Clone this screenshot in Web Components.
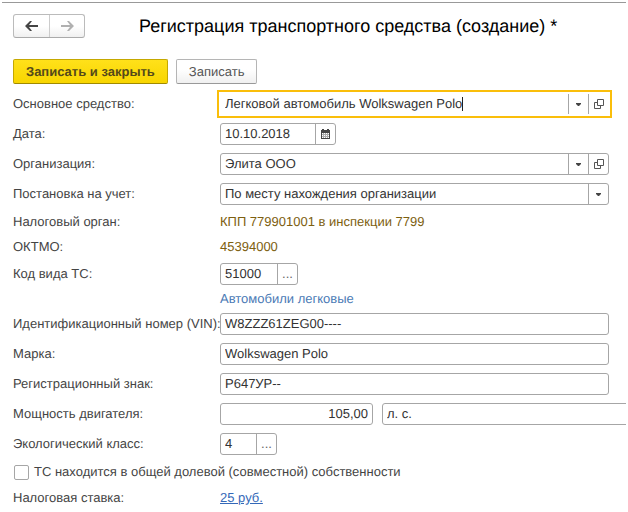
<!DOCTYPE html>
<html lang="ru">
<head>
<meta charset="utf-8">
<meta name="viewport" content="width=device-width">
<title>Регистрация транспортного средства</title>
<style>
  body {
    margin: 0;
    background: #fff;
    color: #444;
    font: 13px/16px "Liberation Sans", Arial, sans-serif;
    text-rendering: geometricPrecision;
  }
</style>
</head>
<body>
<vehicle-page>
  <history-nav slot="nav"></history-nav>
  <span slot="title">Регистрация транспортного средства (создание) *</span>
  <command-button slot="commands" primary>Записать и закрыть</command-button>
  <command-button slot="commands">Записать</command-button>

  <field-row label="Основное средство:" value="Легковой автомобиль Wolkswagen Polo" buttons="list open" active></field-row>
  <field-row label="Дата:" value="10.10.2018" buttons="calendar" style="--w:116px"></field-row>
  <field-row label="Организация:" value="Элита ООО" buttons="list open"></field-row>
  <field-row label="Постановка на учет:" value="По месту нахождения организации" kind="select"></field-row>
  <text-row label="Налоговый орган:">КПП 779901001 в инспекции 7799</text-row>
  <text-row label="ОКТМО:">45394000</text-row>
  <field-row label="Код вида ТС:" value="51000" buttons="more" style="--w:78px"></field-row>
  <text-row kind="note">Автомобили легковые</text-row>
  <field-row label="Идентификационный номер (VIN):" value="W8ZZZ61ZEG00----"></field-row>
  <field-row label="Марка:" value="Wolkswagen Polo"></field-row>
  <field-row label="Регистрационный знак:" value="Р647УР--"></field-row>
  <field-row label="Мощность двигателя:" value="105,00" unit="л. с." style="--w:153px"></field-row>
  <field-row label="Экологический класс:" value="4" buttons="more" style="--w:57px"></field-row>
  <check-row>ТС находится в общей долевой (совместной) собственности</check-row>
  <text-row label="Налоговая ставка:" kind="link">25 руб.</text-row>
</vehicle-page>

<script>
const ICONS = {
  list: '<svg width="5" height="3" viewBox="0 0 5 3"><path d="M0 0h5v1L3 3H2L0 1z" fill="#444"/></svg>',
  open: '<svg width="10" height="10" viewBox="0 0 10 10" fill="none" stroke="#555"><path d="M3.5.5h6v6h-6zM3.5 3.5h-3v6h6v-3"/></svg>',
  calendar: '<svg width="9" height="10" viewBox="0 0 9 10"><path d="M0 1h1V0h2v1h3V0h2v1h1v9H0z" fill="#444"/><path d="M1 4h7v5H1z" fill="#fff"/><path d="M1 5.5h7M1 7.5h7M2.5 4v5M4.5 4v5M6.5 4v5" stroke="#aaa" fill="none"/></svg>',
  more: '...'
};
const NAMES = { list: 'Выбрать из списка', open: 'Открыть', calendar: 'Календарь', more: 'Подобрать' };
const ROW = `
  * { box-sizing: border-box; }
  :host { display: grid; grid-template-columns: 207px minmax(0, 1fr); align-items: center; }
`;

customElements.define('vehicle-page', class extends HTMLElement {
  constructor() {
    super();
    this.attachShadow({ mode: 'open' }).innerHTML = `
      <style>
        :host { display: block; margin: 2px 2px 0; border-top: 1px solid #999; overflow: hidden; }
        header { display: flex; align-items: center; gap: 54px; padding: 11px 11px 0; }
        h1 { margin: 0; color: #000; font-size: 18px; font-weight: 400; line-height: 24px; white-space: nowrap; }
        .commands { display: flex; gap: 8px; padding: 21px 11px 9px; }
        form { display: grid; gap: 8px; padding: 0 17px 5px 11px; }
      </style>
      <header><slot name="nav"></slot><h1><slot name="title"></slot></h1></header>
      <div class="commands"><slot name="commands"></slot></div>
      <form><slot></slot></form>`;
  }
});

customElements.define('history-nav', class extends HTMLElement {
  constructor() {
    super();
    this.attachShadow({ mode: 'open' }).innerHTML = `
      <style>
        :host { display: flex; border: 1px solid #bbb; border-bottom-color: #aaa; border-radius: 3px; background: linear-gradient(#fff 50%, #f0f0f0); }
        button { box-sizing: border-box; display: grid; place-items: center; width: 35px; height: 22px; padding: 0; border: 0; background: none; }
        button + button { border-left: 1px solid #ccc; }
      </style>
      <button type="button" aria-label="Назад"><svg width="13" height="10" viewBox="0 0 13 10" fill="#444"><path d="M0 5L5 0H7L4 4H13V6H4L7 10H5z"/></svg></button>
      <button type="button" aria-label="Вперед"><svg width="13" height="10" viewBox="0 0 13 10" fill="#b0b0b0"><path d="M13 5L8 0H6L9 4H0V6H9L6 10H8z"/></svg></button>`;
  }
});

customElements.define('command-button', class extends HTMLElement {
  constructor() {
    super();
    this.attachShadow({ mode: 'open' }).innerHTML = `
      <style>
        :host { display: block; }
        button {
          height: 25px; padding: 0 12px; border: 1px solid #b5b5b5; border-bottom-color: #999; border-radius: 2px;
          background: linear-gradient(#fff 40%, #f0f0f0); color: #555; font: inherit; text-rendering: inherit; white-space: nowrap;
        }
        :host([primary]) button {
          border-color: #c5a800; border-bottom-color: #a08a00;
          background: linear-gradient(#ffe11a, #f8d500); color: #54491a; font-weight: 700;
        }
      </style>
      <button type="button"><slot></slot></button>`;
  }
});

customElements.define('field-row', class extends HTMLElement {
  connectedCallback() {
    const get = name => this.getAttribute(name) || '';
    const buttons = get('buttons').split(' ').filter(Boolean);
    const control = get('kind') === 'select'
      ? `<select id="control"><option>${get('value')}</option></select><span class="mark">${ICONS.list}</span>`
      : `<input id="control" type="text" value="${get('value')}">${this.hasAttribute('active') ? '<i></i>' : ''}`;
    this.attachShadow({ mode: 'open' }).innerHTML = `
      <style>${ROW}
        label { line-height: 22px; white-space: nowrap; }
        .line { display: flex; gap: 9px; }
        .box {
          display: flex; width: var(--w, 100%); height: 22px; flex: none;
          border: 1px solid #a6a6a6; border-radius: 3px; background: #fff;
        }
        input, select {
          flex: 1; min-width: 0; width: 0; height: 20px; padding: 0 4px; border: 0; outline: 0;
          background: none; color: #333; font: inherit; line-height: 20px; text-rendering: inherit; appearance: none;
        }
        button, .mark {
          display: grid; place-items: center; flex: none; width: 20px; padding: 0;
          border: 0; border-left: 1px solid #a6a6a6; background: none; color: #666; font: inherit;
        }
        .mark { margin-left: -20px; pointer-events: none; }
        :host([active]) .box { border-color: transparent; border-radius: 0; outline: 2px solid #fabe0a; outline-offset: 1px; }
        :host([active]) input { flex: none; width: auto; field-sizing: content; padding-right: 0; }
        i { width: 1px; height: 14px; margin: 3px auto 0 0; background: #222; }
        :host([unit]) .box:first-child input { text-align: right; }
        .unit { flex: 1; width: auto; margin-right: -24px; }
      </style>
      <label for="control">${get('label')}</label>
      <div class="line">
        <div class="box">${control}${buttons.map(b => `<button type="button" aria-label="${NAMES[b]}">${ICONS[b]}</button>`).join('')}</div>
        ${get('unit') && `<div class="box unit"><input type="text" aria-label="Единица измерения" value="${get('unit')}"></div>`}
      </div>`;
  }
});

customElements.define('text-row', class extends HTMLElement {
  connectedCallback() {
    const tag = this.getAttribute('kind') === 'link' ? 'a href="#"' : 'span';
    this.attachShadow({ mode: 'open' }).innerHTML = `
      <style>${ROW}
        :host { line-height: 17px; }
        .value { grid-column: 2; justify-self: start; color: #7d6010; }
        :host([kind=note]) { line-height: 12px; }
        :host([kind=note]) .value { color: #4a7ab5; }
        a.value { color: #3468b8; }
      </style>
      ${this.hasAttribute('label') ? `<span>${this.getAttribute('label')}</span>` : ''}
      <${tag} class="value"><slot></slot></${tag.split(' ')[0]}>`;
  }
});

customElements.define('check-row', class extends HTMLElement {
  constructor() {
    super();
    this.attachShadow({ mode: 'open' }).innerHTML = `
      <style>
        :host { display: block; }
        label { display: flex; align-items: center; gap: 5px; height: 18px; white-space: nowrap; }
        input { box-sizing: border-box; appearance: none; flex: none; width: 15px; height: 15px; margin: 0 0 0 1px; border: 1px solid #a6a6a6; border-radius: 2px; background: #fff; }
        input:checked { background: #fabe0a; }
      </style>
      <label><input type="checkbox"><span><slot></slot></span></label>`;
  }
});
</script>
</body>
</html>
